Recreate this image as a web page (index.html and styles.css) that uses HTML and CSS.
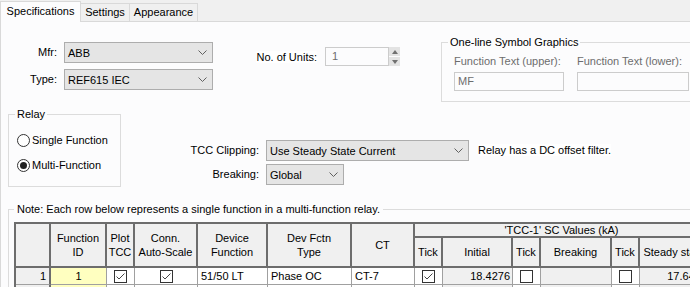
FILE: index.html
```html
<!DOCTYPE html>
<html lang="en">
<head>
  <meta charset="UTF-8">
  <meta name="viewport" content="width=device-width, initial-scale=1.0">
  <title>Relay Specifications</title>
  <link rel="stylesheet" href="styles.css">
</head>
<body>
  <div class="tabs">
    <div class="tab active">Specifications</div>
    <div class="tab tab-settings">Settings</div>
    <div class="tab tab-appearance">Appearance</div>
  </div>

  <div class="panel">
    <div class="top">
      <div class="mfr-form">
        <label>Mfr:</label>
        <div class="combo">
          <span>ABB</span>
          <svg class="chev" width="9" height="5" viewBox="0 0 9 5"><polyline points="0.5,0.5 4.5,4.5 8.5,0.5" fill="none" stroke="#606060"/></svg>
        </div>
        <label>Type:</label>
        <div class="combo">
          <span>REF615 IEC</span>
          <svg class="chev" width="9" height="5" viewBox="0 0 9 5"><polyline points="0.5,0.5 4.5,4.5 8.5,0.5" fill="none" stroke="#606060"/></svg>
        </div>
      </div>

      <div class="units">
        <label class="units-label"><span class="white">No. of Units:</span></label>
        <div class="text-input units-input">1</div>
        <div class="spin">
          <span class="spin-btn"><span class="arrow-up"></span></span>
          <span class="spin-btn"><span class="arrow-down"></span></span>
        </div>
      </div>

      <fieldset class="group graphics">
        <legend>One-line Symbol Graphics</legend>
        <div class="graphics-grid">
          <label class="disabled">Function Text (upper):</label>
          <label class="disabled">Function Text (lower):</label>
          <div class="text-input">MF</div>
          <div class="text-input"></div>
        </div>
      </fieldset>
    </div>

    <div class="mid">
      <fieldset class="group relay">
        <legend>Relay</legend>
        <div class="radio-row"><span class="radio"></span>Single Function</div>
        <div class="radio-row"><span class="radio checked"></span>Multi-Function</div>
      </fieldset>

      <div class="clip-form">
        <label>TCC Clipping:</label>
        <div class="combo combo-wide">
          <span>Use Steady State Current</span>
          <svg class="chev" width="9" height="5" viewBox="0 0 9 5"><polyline points="0.5,0.5 4.5,4.5 8.5,0.5" fill="none" stroke="#606060"/></svg>
        </div>
        <span class="dc-note"><span class="white">Relay has a DC offset filter.</span></span>
        <label>Breaking:</label>
        <div class="combo combo-small">
          <span>Global</span>
          <svg class="chev" width="9" height="5" viewBox="0 0 9 5"><polyline points="0.5,0.5 4.5,4.5 8.5,0.5" fill="none" stroke="#606060"/></svg>
        </div>
      </div>
    </div>

    <fieldset class="group note">
      <legend>Note: Each row below represents a single function in a multi-function relay.</legend>
      <div class="grid">
        <div class="h span2"></div>
        <div class="h span2">Function<br>ID</div>
        <div class="h span2">Plot<br>TCC</div>
        <div class="h span2">Conn.<br>Auto-Scale</div>
        <div class="h span2">Device<br>Function</div>
        <div class="h span2">Dev Fctn<br>Type</div>
        <div class="h span2">CT</div>
        <div class="h sc-head">'TCC-1' SC Values (kA)</div>
        <div class="h">Tick</div>
        <div class="h">Initial</div>
        <div class="h">Tick</div>
        <div class="h">Breaking</div>
        <div class="h">Tick</div>
        <div class="h">Steady state</div>

        <div class="c rh">1</div>
        <div class="c center yellow">1</div>
        <div class="c center"><span class="check"><svg width="11" height="11" viewBox="0 0 11 11"><polyline points="1.5,5.5 4,8 9.5,2.5" fill="none" stroke="#444"/></svg></span></div>
        <div class="c center"><span class="check"><svg width="11" height="11" viewBox="0 0 11 11"><polyline points="1.5,5.5 4,8 9.5,2.5" fill="none" stroke="#444"/></svg></span></div>
        <div class="c">51/50 LT</div>
        <div class="c">Phase OC</div>
        <div class="c">CT-7</div>
        <div class="c center"><span class="check"><svg width="11" height="11" viewBox="0 0 11 11"><polyline points="1.5,5.5 4,8 9.5,2.5" fill="none" stroke="#444"/></svg></span></div>
        <div class="c num gray">18.4276</div>
        <div class="c center"><span class="check"></span></div>
        <div class="c gray"></div>
        <div class="c center"><span class="check"></span></div>
        <div class="c num gray">17.6438</div>

        <div class="c rh"></div>
        <div class="c yellow"></div>
        <div class="c"></div>
        <div class="c"></div>
        <div class="c"></div>
        <div class="c"></div>
        <div class="c"></div>
        <div class="c"></div>
        <div class="c gray"></div>
        <div class="c"></div>
        <div class="c gray"></div>
        <div class="c"></div>
        <div class="c gray"></div>
      </div>
    </fieldset>
  </div>
</body>
</html>
```

FILE: styles.css
```css
body {
  margin: 0;
  width: 690px;
  height: 287px;
  overflow: hidden;
  background-color: #f0f0f0;
  font-family: "Liberation Sans", Arial, sans-serif;
  font-size: 11px;
  color: #000;
}

/* tab strip */
.tabs {
  display: flex;
  align-items: flex-end;
  height: 22px;
  box-sizing: border-box;
  border-bottom: 1px solid #d9d9d9;
}

.tab {
  box-sizing: border-box;
  height: 18px;
  line-height: 17px;
  text-align: center;
  background-color: #f0f0f0;
  border: 1px solid #d9d9d9;
  border-bottom: none;
}

.tab.active {
  width: 81px;
  height: 21px;
  line-height: 19px;
  margin-bottom: -1px;
  background-color: #fcfcfd;
  position: relative;
}

.tab-settings {
  width: 49px;
  border-left: none;
}

.tab-appearance {
  width: 68px;
  border-left: none;
}

/* page */
.panel {
  height: 265px;
  background-color: #fcfcfd;
  border-left: 1px solid #d9d9d9;
  overflow: hidden;
}

.white {
  background-color: #fff;
}

.top {
  display: flex;
  height: 80px;
}

.mfr-form {
  display: grid;
  grid-template-columns: 56px 149px;
  grid-auto-rows: 21px;
  column-gap: 7px;
  row-gap: 6px;
  margin-top: 20px;
}

.mfr-form label,
.clip-form label {
  text-align: right;
  line-height: 21px;
}

.combo {
  display: flex;
  align-items: center;
  justify-content: space-between;
  box-sizing: border-box;
  height: 21px;
  padding: 0 5px 0 3px;
  background-color: #e5e5e5;
  border: 1px solid #adadad;
}

.combo-wide {
  width: 203px;
}

.combo-small {
  width: 78px;
}

.chev {
  display: block;
}

.units {
  display: flex;
  align-items: center;
  height: 19px;
  margin-top: 25px;
  margin-left: 37px;
}

.units-label {
  width: 67px;
  text-align: right;
  margin-right: 8px;
}

.text-input {
  box-sizing: border-box;
  height: 19px;
  line-height: 17px;
  padding: 0 3px;
  border: 1px solid #cccccc;
  color: #6d6d6d;
}

.units-input {
  width: 64px;
  padding-left: 6px;
}

.spin {
  display: flex;
  flex-direction: column;
  width: 11px;
  height: 19px;
  gap: 1px;
}

.spin-btn {
  flex: 1;
  display: flex;
  align-items: center;
  justify-content: center;
  background-color: #e3e3e3;
}

.arrow-up {
  border-left: 3px solid transparent;
  border-right: 3px solid transparent;
  border-bottom: 4px solid #707070;
}

.arrow-down {
  border-left: 3px solid transparent;
  border-right: 3px solid transparent;
  border-top: 4px solid #707070;
}

/* group boxes */
.group {
  margin: 0;
  border: 1px solid #dcdcdc;
  min-width: 0;
}

.group legend {
  line-height: 12px;
  padding: 0 2px;
}

.graphics {
  width: 250px;
  margin-top: 14px;
  margin-left: 41px;
  padding: 7px 12px 10px 12px;
  flex-shrink: 0;
}

.graphics legend {
  margin-left: -6px;
}

.graphics-grid {
  display: grid;
  grid-template-columns: 110px 112px;
  column-gap: 13px;
  row-gap: 4px;
}

.graphics-grid label {
  line-height: 13px;
}

.disabled {
  color: #6d6d6d;
}

.mid {
  display: flex;
  height: 101px;
}

.relay {
  width: 113px;
  box-sizing: border-box;
  height: 79px;
  margin-top: 6px;
  margin-left: 7px;
  padding: 14px 8px 0 8px;
}

.relay legend {
  margin-left: -2px;
}

.radio-row {
  display: flex;
  align-items: center;
  gap: 2px;
  height: 13px;
  line-height: 13px;
  margin-bottom: 12px;
}

.radio {
  box-sizing: border-box;
  width: 13px;
  height: 13px;
  border: 1px solid #333;
  border-radius: 50%;
  background-color: #fff;
  display: flex;
  align-items: center;
  justify-content: center;
}

.radio.checked::after {
  content: "";
  width: 7px;
  height: 7px;
  border-radius: 50%;
  background-color: #222;
}

.clip-form {
  display: grid;
  grid-template-columns: 79px auto auto;
  grid-auto-rows: 21px;
  column-gap: 7px;
  row-gap: 3px;
  margin-top: 38px;
  margin-left: 59px;
  align-self: flex-start;
  justify-items: start;
}

.clip-form label {
  justify-self: stretch;
}

.dc-note {
  line-height: 21px;
  margin-left: 2px;
}

.note {
  margin-left: 7px;
  padding: 7px 0 0 5px;
  border-right: none;
  min-width: min-content;
}

.note legend {
  padding: 0 3px;
}

/* function grid */
.grid {
  display: grid;
  grid-template-columns: 35px 56px 28px 63px 70px 84px 63px 28px 70px 28px 71px 28px 70px;
  grid-template-rows: 14px 30px 17px 17px;
  width: max-content;
  border-top: 2px solid #6d6d6d;
  border-left: 2px solid #6d6d6d;
}

.h {
  box-sizing: border-box;
  display: flex;
  align-items: center;
  justify-content: center;
  text-align: center;
  line-height: 14px;
  white-space: nowrap;
  overflow: hidden;
  background-color: #f0f0f0;
  border-right: 2px solid #6d6d6d;
  border-bottom: 2px solid #6d6d6d;
}

.span2 {
  grid-row: span 2;
}

.sc-head {
  grid-column: 8 / span 6;
}

.c {
  box-sizing: border-box;
  display: flex;
  align-items: center;
  padding: 0 3px;
  white-space: nowrap;
  overflow: hidden;
  background-color: #fff;
  border-right: 1px solid #a0a0a0;
  border-bottom: 1px solid #a0a0a0;
}

.rh {
  justify-content: flex-end;
  background-color: #f0f0f0;
  border-right: 2px solid #6d6d6d;
}

.center {
  justify-content: center;
}

.num {
  justify-content: flex-end;
  padding-right: 2px;
}

.yellow {
  background-color: #ffffc0;
}

.gray {
  background-color: #f0f0f0;
}

.check {
  box-sizing: border-box;
  display: flex;
  width: 13px;
  height: 13px;
  border: 1px solid #333;
  background-color: #fff;
}
```
